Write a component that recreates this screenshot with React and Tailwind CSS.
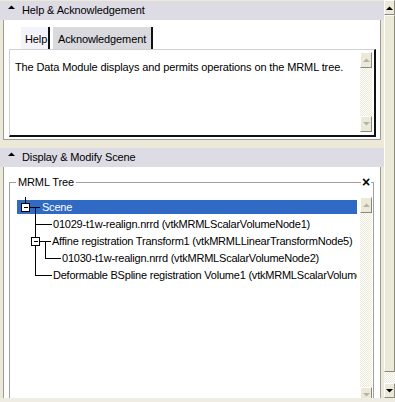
const checker =
  "bg-[repeating-conic-gradient(#ece9d8_0_25%,#ffffff_0_50%)] bg-[length:2px_2px]";

function Arrow({ up, disabled }) {
  return (
    <svg width="7" height="4" viewBox="0 0 7 4">
      <path
        d={up ? "M0 4H7L3.5 0.5Z" : "M0 0H7L3.5 3.5Z"}
        fill={disabled ? "#b5b3a8" : "#000"}
      />
    </svg>
  );
}

function ScrollButton({ up, disabled, className = "" }) {
  return (
    <div
      className={`flex items-center justify-center bg-[#ece9d8] border border-t-white border-l-white border-r-[#8c8a7f] border-b-[#8c8a7f] ${className}`}
    >
      <Arrow up={up} disabled={disabled} />
    </div>
  );
}

function PanelHeader({ title }) {
  return (
    <div className="relative h-[19px] bg-[#dddce5] flex items-center pl-[22px] text-[11px] text-black">
      <svg
        className="absolute left-[8px] top-[4px]"
        width="7"
        height="4"
        viewBox="0 0 7 4"
      >
        <path d="M0 4H7L3.5 0.5Z" fill="#000" />
      </svg>
      {title}
    </div>
  );
}

const rows = [
  { label: "Scene", pl: "pl-[25px]", selected: true },
  { label: "01029-t1w-realign.nrrd (vtkMRMLScalarVolumeNode1)", pl: "pl-[36px]" },
  { label: "Affine registration Transform1 (vtkMRMLLinearTransformNode5)", pl: "pl-[35px]" },
  { label: "01030-t1w-realign.nrrd (vtkMRMLScalarVolumeNode2)", pl: "pl-[45px]" },
  { label: "Deformable BSpline registration Volume1 (vtkMRMLScalarVolume", pl: "pl-[36px]" },
];

function TreeLines() {
  return (
    <svg
      className="absolute left-0 top-0 pointer-events-none"
      width="60"
      height="100"
      viewBox="0 0 60 100"
      shapeRendering="crispEdges"
    >
      <g stroke="#000" strokeWidth="1" fill="none">
        <path d="M8.5 0V6.5" />
        <path d="M12.5 10.5H23" />
        <path d="M18.5 10.5V78.5" />
        <path d="M18.5 27.5H35" />
        <path d="M22.5 44.5H34" />
        <path d="M28.5 44.5V61.5H44" />
        <path d="M18.5 78.5H35" />
        <rect x="4.5" y="6.5" width="8" height="8" fill="#fff" />
        <path d="M6.5 10.5H10.5" />
        <rect x="14.5" y="40.5" width="8" height="8" fill="#fff" />
        <path d="M16.5 44.5H20.5" />
      </g>
    </svg>
  );
}

export default function App() {
  return (
    <div className="w-[395px] h-[402px] overflow-hidden bg-[#ece9d8] flex flex-col font-['Liberation_Sans',Arial,sans-serif] text-[11px] tracking-[-0.12px] text-black">
      <div className="h-[398px] flex">
        <div className="w-[384px] flex flex-col">
          {/* Help & Acknowledgement */}
          <div className="mt-[1px]">
            <PanelHeader title="Help & Acknowledgement" />
            <div className="mx-[3px] h-[120px] bg-white border-l border-r border-b border-[#9c9c9c] flex flex-col pt-[7px]">
              <div className="flex h-[22px] ml-[17px]">
                <div className="w-[29px] bg-[#f3f3fb] border-r-2 border-[#111] pl-[4px] pt-[4px]">
                  Help
                </div>
                <div className="ml-[3px] w-[100px] bg-[#d9d9de] border-r-2 border-[#111] pl-[5px] pt-[4px]">
                  Acknowledgement
                </div>
              </div>
              <div className="ml-[5px] mr-[4px] h-[88px] flex border-t border-l border-[#d0d0d0] border-r-2 border-b-2 border-r-[#111] border-b-[#111]">
                <div className="flex-1 pl-[5px] pt-[9px]">
                  The Data Module displays and permits operations on the MRML tree.
                </div>
                <div className={`w-[12px] mt-[2px] mb-[3px] mr-[2px] flex flex-col ${checker}`}>
                  <ScrollButton up disabled className="h-[16px]" />
                  <div className="flex-1" />
                  <ScrollButton disabled className="h-[16px]" />
                </div>
              </div>
            </div>
          </div>

          {/* Display & Modify Scene */}
          <div className="mt-[8px] flex-1 flex flex-col min-h-0">
            <PanelHeader title="Display & Modify Scene" />
            <div className="mx-[3px] flex-1 min-h-0 overflow-hidden bg-white border-l border-r border-[#9c9c9c] pt-[15px] pl-[5px] pr-[6px]">
              <div className="relative h-[260px] border border-[#a0a0a0] pt-[14px] pl-[7px] pr-[1px] flex">
                <span className="absolute left-[6px] -top-[8px] bg-white px-[2px] leading-[14px]">
                  MRML Tree
                </span>
                <span className="absolute right-[2px] -top-[9px] bg-white px-[1px] text-[14px] font-bold leading-[16px]">
                  ×
                </span>
                <div className="relative flex-1 min-w-0 pt-[2px] overflow-hidden tracking-[-0.22px]">
                  {rows.map((r) => (
                    <div key={r.label} className="h-[17px] flex items-start">
                      <div
                        className={`mt-[1px] h-[14px] w-full overflow-hidden whitespace-nowrap leading-[14px] ${r.pl} ${
                          r.selected ? "bg-[#316ac5] text-white" : ""
                        }`}
                      >
                        {r.label}
                      </div>
                    </div>
                  ))}
                  <TreeLines />
                </div>
                <div className={`ml-[3px] w-[12px] flex flex-col ${checker}`}>
                  <ScrollButton up disabled className="h-[16px]" />
                  <div className="h-[174px]" />
                  <ScrollButton disabled className="h-[16px]" />
                </div>
              </div>
            </div>
          </div>
        </div>

        {/* outer scrollbar */}
        <div className="w-[11px] flex flex-col">
          <ScrollButton up className="h-[15px]" />
          <div className="flex-1 bg-[#ece9d8] border border-t-white border-l-white border-r-[#8c8a7f] border-b-[#8c8a7f]" />
          <div className={`h-[11px] ${checker}`} />
          <ScrollButton className="h-[15px]" />
        </div>
      </div>
      <div className="h-[4px] bg-[#eeece3]" />
    </div>
  );
}
